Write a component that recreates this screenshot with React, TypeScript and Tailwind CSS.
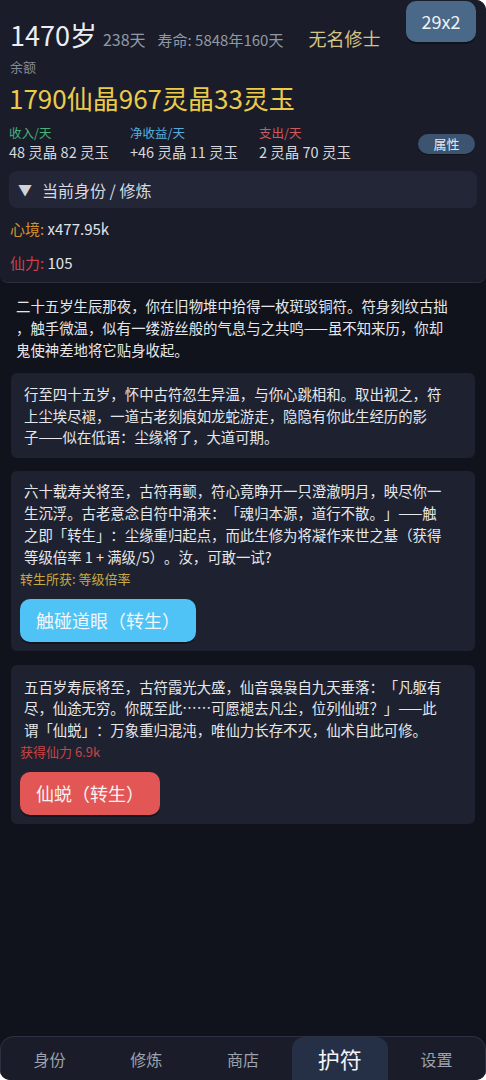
import React from 'react';

const STORY_INTRO = [
	'二十五岁生辰那夜，你在旧物堆中拾得一枚斑驳铜符。符身刻纹古拙',
	'，触手微温，似有一缕游丝般的气息与之共鸣——虽不知来历，你却',
	'鬼使神差地将它贴身收起。',
];

const STORY_AGE45 = [
	'行至四十五岁，怀中古符忽生异温，与你心跳相和。取出视之，符',
	'上尘埃尽褪，一道古老刻痕如龙蛇游走，隐隐有你此生经历的影',
	'子——似在低语：尘缘将了，大道可期。',
];

const STORY_REBIRTH = [
	'六十载寿关将至，古符再颤，符心竟睁开一只澄澈明月，映尽你一',
	'生沉浮。古老意念自符中涌来：「魂归本源，道行不散。」——触',
	'之即「转生」：尘缘重归起点，而此生修为将凝作来世之基（获得',
	'等级倍率 1 + 满级/5）。汝，可敢一试?',
];

const STORY_ASCEND = [
	'五百岁寿辰将至，古符霞光大盛，仙音袅袅自九天垂落：「凡躯有',
	'尽，仙途无穷。你既至此……可愿褪去凡尘，位列仙班？」——此',
	'谓「仙蜕」：万象重归混沌，唯仙力长存不灭，仙术自此可修。',
];

const TABS = ['身份', '修炼', '商店', '护符', '设置'];

function Lines({ lines, leading = 'leading-[21.5px]' }: { lines: string[]; leading?: string }) {
	return (
		<p className={`text-[14.4px] ${leading} text-[#e6e7ea]`}>
			{lines.map((l) => (
				<span key={l} className="block whitespace-nowrap">{l}</span>
			))}
		</p>
	);
}

function Header() {
	return (
		<header className="bg-[#1a1d29] border-b border-[#2b2f3d] rounded-b-[8px] px-[9px] pb-[8px]">
			<div className="flex justify-between items-start">
				<div className="flex items-baseline pt-[19px] pl-[1px]">
					<span className="text-[27px] leading-[32px] text-[#eceef2]">1470岁</span>
					<span className="ml-[6px] text-[16px] text-[#9299a5]">238天</span>
					<span className="ml-[12px] text-[15px] text-[#9299a5]">寿命: 5848年160天</span>
					<span className="ml-[25px] text-[18px] text-[#d6c386]">无名修士</span>
				</div>
				<button className="mt-[1px] mr-[1px] w-[70px] h-[41px] rounded-[10px] bg-[#4a6887] shadow-[0_2px_0_rgba(0,0,0,0.35)] text-[18px] text-[#eef2f6]">
					29x2
				</button>
			</div>
			<div className="mt-[6px] pl-[1px] text-[13px] leading-[18px] text-[#858b97]">余额</div>
			<div className="mt-[5px] text-[26px] leading-[34px] text-[#eccb4a]">1790仙晶967灵晶33灵玉</div>
			<div className="mt-[10px] flex items-center">
				<div className="w-[121px]">
					<div className="text-[12.5px] leading-[16px] text-[#48b07a]">收入/天</div>
					<div className="mt-[1px] text-[14.5px] leading-[20px] text-[#d6d8dd]">48 灵晶 82 灵玉</div>
				</div>
				<div className="w-[129px]">
					<div className="text-[12.5px] leading-[16px] text-[#56aee0]">净收益/天</div>
					<div className="mt-[1px] text-[14.5px] leading-[20px] text-[#d6d8dd]">+46 灵晶 11 灵玉</div>
				</div>
				<div className="flex-1">
					<div className="text-[12.5px] leading-[16px] text-[#cf5a5e]">支出/天</div>
					<div className="mt-[1px] text-[14.5px] leading-[20px] text-[#d6d8dd]">2 灵晶 70 灵玉</div>
				</div>
				<button className="mr-[2px] w-[57px] h-[20px] rounded-full bg-[#3c5470] shadow-[0_1px_0_rgba(0,0,0,0.35)] text-[13px] leading-[20px] text-[#e4e8ee]">
					属性
				</button>
			</div>
			<div className="mt-[9px] h-[37px] rounded-[8px] bg-[#222637] flex items-center pl-[9px] gap-[10px]">
				<span className="text-[14px] text-[#cfd2d9]">▼</span>
				<span className="text-[16px] text-[#d8dae0]">当前身份 / 修炼</span>
			</div>
			<div className="mt-[10px] pl-[1px] text-[15px] leading-[22px]">
				<span className="text-[#d6922e]">心境: </span>
				<span className="text-[#e2e4e8]">x477.95k</span>
			</div>
			<div className="mt-[12px] pl-[1px] text-[15px] leading-[22px]">
				<span className="text-[#cf3f4a]">仙力: </span>
				<span className="text-[#e2e4e8]">105</span>
			</div>
		</header>
	);
}

function Story() {
	return (
		<main className="flex-1 px-[11px] pt-[12px]">
			<div className="px-[5px]">
				<Lines lines={STORY_INTRO} leading="leading-[22px]" />
			</div>
			<div className="mt-[12px] rounded-[6px] bg-[#1e2230] px-[13px] pt-[10px] pb-[10px]">
				<Lines lines={STORY_AGE45} />
			</div>
			<div className="mt-[13px] rounded-[6px] bg-[#1e2230] px-[9px] pt-[9px] pb-[9px]">
				<div className="px-[4px]">
					<Lines lines={STORY_REBIRTH} leading="leading-[22px]" />
				</div>
				<div className="mt-[2px] text-[13px] leading-[18px] text-[#c9a843]">转生所获: 等级倍率</div>
				<button className="mt-[11px] h-[43px] px-[16px] rounded-[10px] bg-[#4fc3f5] shadow-[0_2px_0_rgba(0,0,0,0.35)] text-[18px] text-[#f2f7fb]">
					触碰道眼（转生）
				</button>
			</div>
			<div className="mt-[14px] rounded-[6px] bg-[#1e2230] px-[9px] pt-[11px] pb-[9px]">
				<div className="px-[4px]">
					<Lines lines={STORY_ASCEND} />
				</div>
				<div className="mt-[3px] text-[13px] leading-[18px] text-[#c94446]">获得仙力 6.9k</div>
				<button className="mt-[11px] h-[43px] px-[16px] rounded-[10px] bg-[#e25656] shadow-[0_2px_0_rgba(0,0,0,0.35)] text-[18px] text-[#f7f2f2]">
					仙蜕（转生）
				</button>
			</div>
		</main>
	);
}

function NavBar() {
	return (
		<nav className="h-[44px] grid grid-cols-5 bg-[#1a1d29] border-t border-x border-[#2c3040] rounded-t-[14px]">
			{TABS.map((t) => {
				const active = t === '护符';
				return (
					<div key={t} className="flex items-center justify-center">
						<div
							className={
								active
									? 'w-[96px] h-[43px] rounded-t-[12px] bg-[#253046] flex items-center justify-center text-[22px] text-[#f2f4f7]'
									: 'text-[16px] text-[#9ca2ae]'
							}
						>
							{t}
						</div>
					</div>
				);
			})}
		</nav>
	);
}

export default function App() {
	return (
		<div className="bg-white">
			<div className="w-[486px] h-[1080px] overflow-hidden flex flex-col bg-[#10131b] rounded-tr-[10px] rounded-b-[10px] [text-spacing-trim:space-all] font-['Noto_Sans_CJK_SC','Noto_Sans',sans-serif]">
				<Header />
				<Story />
				<NavBar />
			</div>
		</div>
	);
}
